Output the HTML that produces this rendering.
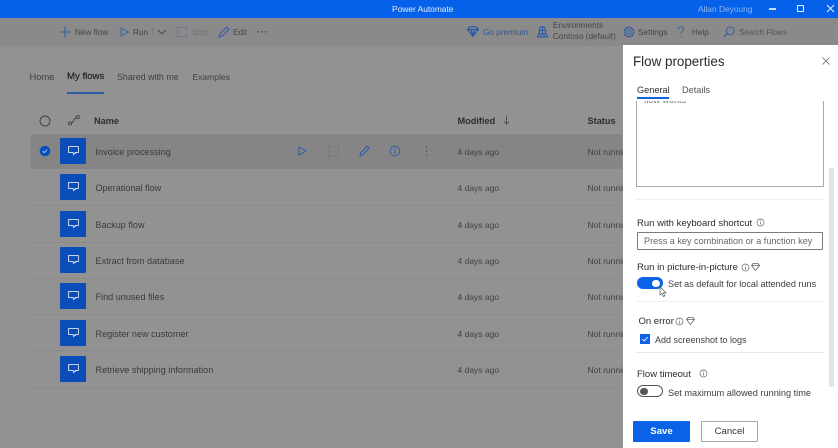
<!DOCTYPE html>
<html><head><meta charset="utf-8"><style>
html,body{margin:0;padding:0}
body{width:838px;height:448px;overflow:hidden;position:relative;background:#929292;font-family:"Liberation Sans",sans-serif;color:#333}
#w{position:absolute;left:0;top:0;width:838px;height:448px;filter:blur(.25px)}
.a{position:absolute;white-space:nowrap}
svg{position:absolute;overflow:visible}
.t{position:absolute;white-space:nowrap;line-height:12px}
.n{font-size:9.1px;color:#3a3a3a;left:95.5px}
.m{font-size:8.5px;color:#414141;left:457.5px}
.s{font-size:8.5px;color:#414141;left:587.5px;width:35px;overflow:hidden}
.tile{position:absolute;left:60px;width:26px;height:26px;background:#0a4db8;border-radius:1px}
.tile svg{left:8px;top:8px}
.sep{position:absolute;left:32px;width:590px;height:1px;background:#8b8b8b}
.b{font-size:9.2px;color:#2e2e2e;font-weight:bold}
.p{font-size:9.1px;color:#3d3d3d}
.l{font-size:9.5px;color:#2b2b2b}
.tb{font-size:8.2px;color:#454545}
</style></head><body><div id="w">

<div class="a" style="left:0;top:0;width:838px;height:18px;background:#0561ea"></div>
<div class="t" style="left:392px;top:2.5px;font-size:8.4px;color:#e6effc">Power Automate</div>
<div class="t" style="left:698px;top:2.5px;font-size:8.4px;color:#8db6f2">Allan Deyoung</div>
<div class="a" style="left:769px;top:8px;width:7px;height:1.5px;background:#c5dafa"></div>
<div class="a" style="left:797px;top:5px;width:5px;height:5px;border:1.5px solid #e3edfc"></div>
<svg style="left:826px;top:4px" width="9" height="9"><path d="M1 1L8 8M8 1L1 8" stroke="#e3edfc" stroke-width="1.1"/></svg>

<div class="a" style="left:0;top:18px;width:838px;height:28px;background:#8a8a8a"></div>

<svg style="left:59px;top:26px" width="12" height="12"><path d="M6 .5V11.5M.5 6H11.5" stroke="#2a5ca8" stroke-width="1"/></svg>
<div class="t tb" style="left:75px;top:26.5px">New flow</div>
<svg style="left:120px;top:27px" width="10" height="10"><path d="M1 1L8.5 5L1 9Z" fill="none" stroke="#2a5ca8" stroke-width=".9"/></svg>
<div class="t tb" style="left:133px;top:26.5px">Run</div>
<div class="a" style="left:152px;top:28px;width:1px;height:7px;background:#7a7a7a"></div>
<svg style="left:157px;top:29px" width="10" height="6"><path d="M1 1L5 5L9 1" fill="none" stroke="#444" stroke-width=".9"/></svg>
<div class="a" style="left:177px;top:27px;width:8px;height:8px;border:1px solid #707a8a"></div>
<div class="t tb" style="left:192px;top:26.5px;color:#727272">Stop</div>
<svg style="left:218px;top:26px" width="12" height="12"><path d="M1 11L1.8 8L8.8 1L11 3.2L4 10.2Z" fill="none" stroke="#2a5ca8" stroke-width="1"/></svg>
<div class="t tb" style="left:233px;top:26.5px">Edit</div>
<div class="t" style="left:257px;top:26px;font-size:9px;letter-spacing:.6px;color:#444;font-weight:bold">···</div>

<svg style="left:467px;top:26px" width="12" height="11"><path d="M3 .8H9L11.4 3.6L6 10L.6 3.6ZM.6 3.6H11.4M4.3 3.6L6 10L7.7 3.6" fill="none" stroke="#1f56ad" stroke-width="1.1"/></svg>
<div class="t tb" style="left:483px;top:26.5px;color:#2e5aa0">Go premium</div>
<svg style="left:537px;top:26px" width="11" height="12"><path d="M5.5 .8C3.3 .8 2.3 2.6 2.3 5V8H8.7V5C8.7 2.6 7.7 .8 5.5 .8ZM.5 11H10.5M1.5 8H9.5L10.5 11H.5ZM4 8V11M7 8V11M5.5 1V8M2.5 4.5H8.5" fill="none" stroke="#1f56ad" stroke-width="1"/></svg>
<div class="t tb" style="left:553px;top:21px;line-height:10.5px">Environments<br>Contoso (default)</div>
<svg style="left:623px;top:26px" width="12" height="12"><circle cx="6" cy="6" r="2" fill="none" stroke="#1f56ad" stroke-width=".9"/><circle cx="6" cy="6" r="4.6" fill="none" stroke="#1f56ad" stroke-width="1.5" stroke-dasharray="2 .6"/></svg>
<div class="t tb" style="left:638px;top:26.5px">Settings</div>
<svg style="left:677px;top:26px" width="8" height="12"><path d="M1 3.2C1 1.6 2.4.7 3.8.7C5.4.7 6.7 1.7 6.7 3.2C6.7 5.2 4 5.4 4 7.6M4 10V11" fill="none" stroke="#2a5ca8" stroke-width=".9"/></svg>
<div class="t tb" style="left:692px;top:26.5px">Help</div>
<svg style="left:723px;top:26px" width="12" height="12"><circle cx="7.2" cy="4.8" r="3.9" fill="none" stroke="#2a5ca8" stroke-width=".9"/><path d="M4.4 7.6L1 11" stroke="#2a5ca8" stroke-width="1"/></svg>
<div class="t tb" style="left:739px;top:26.5px;font-size:7.9px;color:#555">Search Flows</div>

<div class="t" style="left:29.5px;top:70.5px;font-size:9.4px;color:#404040">Home</div>
<div class="t" style="left:67px;top:70.5px;font-size:9.6px;color:#262626;-webkit-text-stroke:.2px #262626">My flows</div>
<div class="t" style="left:117px;top:70.5px;font-size:8.9px;color:#404040">Shared with me</div>
<div class="t" style="left:192.5px;top:70.5px;font-size:8.5px;color:#404040">Examples</div>
<div class="a" style="left:67px;top:92px;width:37px;height:1.5px;background:#2c5ca6"></div>

<svg style="left:39px;top:115px" width="12" height="12"><circle cx="6" cy="6" r="5" fill="none" stroke="#3c3c3c" stroke-width=".9"/></svg>
<svg style="left:68px;top:115px" width="12" height="11"><circle cx="2" cy="8.5" r="1.5" fill="none" stroke="#333" stroke-width=".8"/><circle cx="9.8" cy="2" r="1.5" fill="none" stroke="#333" stroke-width=".8"/><path d="M3.5 8C6 7.5 5.5 3 8.4 2.6" fill="none" stroke="#333" stroke-width=".8"/></svg>
<div class="t b" style="left:94px;top:115px">Name</div>
<div class="t b" style="left:457.5px;top:115px">Modified</div>
<svg style="left:503px;top:115px" width="7" height="10"><path d="M3.5 .5V9M1 6.5L3.5 9L6 6.5" fill="none" stroke="#444" stroke-width=".8"/></svg>
<div class="t b" style="left:587.5px;top:115px">Status</div>

<div class="a" style="left:31px;top:134px;width:591px;height:35px;background:#858585"></div>
<svg style="left:39px;top:145px" width="12" height="12"><circle cx="6" cy="6" r="5.3" fill="#0b4fbd"/><path d="M3.8 6.2L5.3 7.6L8.2 4.6" fill="none" stroke="#cfdcf2" stroke-width=".8"/></svg>

<div class="sep" style="top:205px"></div><div class="sep" style="top:242px"></div><div class="sep" style="top:278px"></div><div class="sep" style="top:314px"></div><div class="sep" style="top:350px"></div><div class="sep" style="top:387px"></div>

<div class="tile" style="top:138px"><svg width="11" height="10"><path d="M.6.6H10.4V6.4H7.4L5.6 8.6L5 6.4H.6ZM6 8L8.4 6.6" fill="none" stroke="#dfe7f5" stroke-width=".9"/></svg></div>
<div class="tile" style="top:174px"><svg width="11" height="10"><path d="M.6.6H10.4V6.4H7.4L5.6 8.6L5 6.4H.6ZM6 8L8.4 6.6" fill="none" stroke="#dfe7f5" stroke-width=".9"/></svg></div>
<div class="tile" style="top:211px"><svg width="11" height="10"><path d="M.6.6H10.4V6.4H7.4L5.6 8.6L5 6.4H.6ZM6 8L8.4 6.6" fill="none" stroke="#dfe7f5" stroke-width=".9"/></svg></div>
<div class="tile" style="top:247px"><svg width="11" height="10"><path d="M.6.6H10.4V6.4H7.4L5.6 8.6L5 6.4H.6ZM6 8L8.4 6.6" fill="none" stroke="#dfe7f5" stroke-width=".9"/></svg></div>
<div class="tile" style="top:283px"><svg width="11" height="10"><path d="M.6.6H10.4V6.4H7.4L5.6 8.6L5 6.4H.6ZM6 8L8.4 6.6" fill="none" stroke="#dfe7f5" stroke-width=".9"/></svg></div>
<div class="tile" style="top:320px"><svg width="11" height="10"><path d="M.6.6H10.4V6.4H7.4L5.6 8.6L5 6.4H.6ZM6 8L8.4 6.6" fill="none" stroke="#dfe7f5" stroke-width=".9"/></svg></div>
<div class="tile" style="top:356px"><svg width="11" height="10"><path d="M.6.6H10.4V6.4H7.4L5.6 8.6L5 6.4H.6ZM6 8L8.4 6.6" fill="none" stroke="#dfe7f5" stroke-width=".9"/></svg></div>

<div class="t n" style="top:146px">Invoice processing</div>
<div class="t n" style="top:182px">Operational flow</div>
<div class="t n" style="top:219px">Backup flow</div>
<div class="t n" style="top:255px">Extract from database</div>
<div class="t n" style="top:291px">Find unused files</div>
<div class="t n" style="top:328px">Register new customer</div>
<div class="t n" style="top:364px">Retrieve shipping information</div>

<div class="t m" style="top:146px">4 days ago</div><div class="t m" style="top:182px">4 days ago</div><div class="t m" style="top:219px">4 days ago</div><div class="t m" style="top:255px">4 days ago</div><div class="t m" style="top:291px">4 days ago</div><div class="t m" style="top:328px">4 days ago</div><div class="t m" style="top:364px">4 days ago</div>

<div class="t s" style="top:146px">Not running</div><div class="t s" style="top:182px">Not running</div><div class="t s" style="top:219px">Not running</div><div class="t s" style="top:255px">Not running</div><div class="t s" style="top:291px">Not running</div><div class="t s" style="top:328px">Not running</div><div class="t s" style="top:364px">Not running</div>

<svg style="left:298px;top:146px" width="9" height="10"><path d="M1 1L7.8 5L1 9Z" fill="none" stroke="#2a5ca8" stroke-width="1"/></svg>
<div class="a" style="left:328px;top:146px;width:9px;height:9px;border:1px solid #7b7b7b"></div>
<svg style="left:359px;top:145px" width="11" height="12"><path d="M1 11L1.6 8L8 1.2L10 3.2L3.6 10Z" fill="none" stroke="#2a5ca8" stroke-width="1"/></svg>
<svg style="left:389px;top:145px" width="12" height="12"><circle cx="6" cy="6" r="4.8" fill="none" stroke="#2a5ca8" stroke-width=".9"/><path d="M6 5V8.6M6 3.2V4.2" stroke="#2a5ca8" stroke-width=".9"/></svg>
<svg style="left:425px;top:146px" width="3" height="10"><path d="M1.5 .5V1.7M1.5 4.4V5.6M1.5 8.3V9.5" stroke="#444" stroke-width="1"/></svg>

<div class="a" style="left:623px;top:45px;width:215px;height:403px;background:#fff"></div>
<div class="t" style="left:633px;top:54px;font-size:13.4px;line-height:16px;color:#2a2a2a">Flow properties</div>
<svg style="left:822px;top:57px" width="8" height="8"><path d="M.5 .5L7.5 7.5M7.5 .5L.5 7.5" stroke="#666" stroke-width=".8"/></svg>
<div class="t" style="left:637px;top:83.5px;font-size:9.2px;color:#2b2b2b">General</div>
<div class="t" style="left:682px;top:83.5px;font-size:9.2px;color:#555">Details</div>
<div class="a" style="left:637px;top:97px;width:32px;height:1.5px;background:#1265e0"></div>

<div class="a" style="left:636px;top:101px;width:188px;height:85.5px;border:1px solid #aaa;border-top:0;border-right-width:1.5px;border-bottom-width:1.5px;overflow:hidden;box-sizing:border-box">
<div class="t" style="left:7px;top:-7px;font-size:9px;color:#6c6c6c">flow works</div></div>
<div class="a" style="left:829px;top:168px;width:5px;height:219px;background:#e4e4e4"></div>

<div class="a" style="left:636px;top:199px;width:188px;height:1px;background:#efefef"></div>
<div class="t l" style="left:637px;top:218px">Run with keyboard shortcut</div>
<svg style="left:756px;top:218px" width="9" height="9"><circle cx="4.5" cy="4.5" r="3.5" fill="none" stroke="#666" stroke-width=".7"/><path d="M4.5 4V6.6M4.5 2.4V3.2" stroke="#666" stroke-width=".7"/></svg>
<div class="a" style="left:637px;top:232px;width:186px;height:18px;border:1px solid #7d7d7d;border-radius:1px;box-sizing:border-box"></div>
<div class="t" style="left:644px;top:235px;font-size:9.1px;color:#666">Press a key combination or a function key</div>

<div class="t l" style="left:637px;top:262px">Run in picture-in-picture</div>
<svg style="left:741px;top:263px" width="9" height="9"><circle cx="4.5" cy="4.5" r="3.5" fill="none" stroke="#666" stroke-width=".7"/><path d="M4.5 4V6.6M4.5 2.4V3.2" stroke="#666" stroke-width=".7"/></svg>
<svg style="left:751px;top:263px" width="9" height="8"><path d="M2 .5H7L8.5 2.5L4.5 7.5L.5 2.5ZM.5 2.5H8.5" fill="none" stroke="#666" stroke-width=".8"/></svg>
<div class="a" style="left:637px;top:277px;width:26px;height:12px;background:#0a63e6;border-radius:7px"></div>
<div class="a" style="left:652px;top:279.5px;width:7.5px;height:7.5px;background:#fff;border-radius:50%"></div>
<svg style="left:659px;top:286px" width="8" height="12"><path d="M1 .7V9L3 7.4L4.4 10.6L5.8 10L4.4 6.9H7Z" fill="#fff" stroke="#555" stroke-width=".7"/></svg>
<div class="t p" style="left:668px;top:278px">Set as default for local attended runs</div>
<div class="a" style="left:636px;top:301px;width:188px;height:1px;background:#efefef"></div>

<div class="t l" style="left:638.5px;top:316px">On error</div>
<svg style="left:675px;top:317px" width="9" height="9"><circle cx="4.5" cy="4.5" r="3.5" fill="none" stroke="#666" stroke-width=".7"/><path d="M4.5 4V6.6M4.5 2.4V3.2" stroke="#666" stroke-width=".7"/></svg>
<svg style="left:686px;top:317px" width="9" height="8"><path d="M2 .5H7L8.5 2.5L4.5 7.5L.5 2.5ZM.5 2.5H8.5" fill="none" stroke="#666" stroke-width=".8"/></svg>
<div class="a" style="left:640px;top:334px;width:10px;height:10px;background:#0a63e6"></div>
<svg style="left:640px;top:334px" width="10" height="10"><path d="M2.4 5.2L4.2 7L7.6 3.2" fill="none" stroke="#fff" stroke-width=".9"/></svg>
<div class="t p" style="left:655px;top:333.5px;font-size:9px">Add screenshot to logs</div>
<div class="a" style="left:636px;top:352px;width:188px;height:1px;background:#e6e6e6"></div>

<div class="t l" style="left:637px;top:369px">Flow timeout</div>
<svg style="left:699px;top:369px" width="9" height="9"><circle cx="4.5" cy="4.5" r="3.5" fill="none" stroke="#666" stroke-width=".7"/><path d="M4.5 4V6.6M4.5 2.4V3.2" stroke="#666" stroke-width=".7"/></svg>
<div class="a" style="left:637px;top:385px;width:26px;height:12px;border:1px solid #555;border-radius:7px;box-sizing:border-box"></div>
<div class="a" style="left:640px;top:387.5px;width:7.5px;height:7.5px;background:#555;border-radius:50%"></div>
<div class="t p" style="left:668px;top:386.5px;font-size:9.2px">Set maximum allowed running time</div>

<div class="a" style="left:633px;top:421px;width:57px;height:21px;background:#0a63e6;border-radius:1px"></div>
<div class="t" style="left:633px;top:426px;width:57px;text-align:center;font-size:9.6px;color:#fff;font-weight:bold">Save</div>
<div class="a" style="left:701px;top:421px;width:57px;height:21px;border:1px solid #a6a6a6;border-radius:1px;box-sizing:border-box;background:#fff"></div>
<div class="t" style="left:701px;top:426px;width:57px;text-align:center;font-size:9.6px;color:#333">Cancel</div>

</div></body></html>
